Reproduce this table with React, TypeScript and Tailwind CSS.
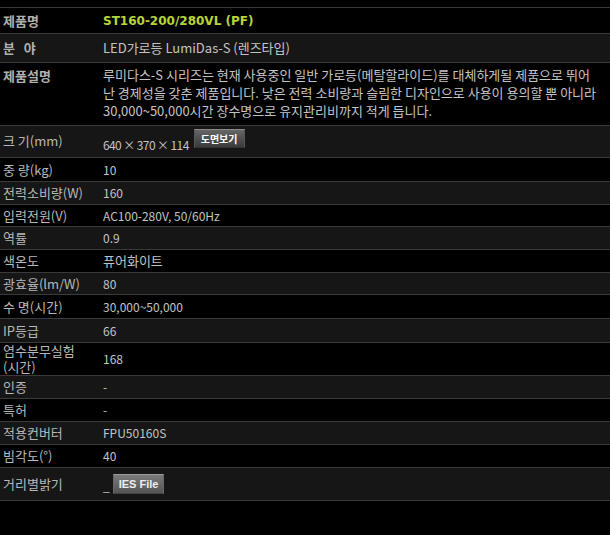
import React from "react";

type Row = {
  label: React.ReactNode;
  value: React.ReactNode;
  h: string;
  bold?: boolean;
  gray: boolean;
  align?: string;
};

const F = { fontFamily: '"Noto Sans CJK KR", "Noto Sans", sans-serif' };

const K = ({ children }: { children: React.ReactNode }) => <span className="text-[13px]">{children}</span>;

export default function App() {
  const rows: Row[] = [
    {
      label: <K>제품명</K>,
      bold: true,
      gray: false,
      h: "h-[26px]",
      value: (
        <span className="font-bold text-[#b8d43a]" style={{ fontFamily: '"DejaVu Sans", sans-serif' }}>
          ST160-200/280VL (PF)
        </span>
      ),
    },
    {
      label: <K>분&nbsp;&nbsp;&nbsp;야</K>,
      bold: true,
      gray: true,
      h: "h-[29px]",
      value: <K>LED가로등 LumiDas-S (렌즈타입)</K>,
    },
    {
      label: <K>제품설명</K>,
      bold: true,
      gray: false,
      h: "h-[63px]",
      align: "items-start pt-[3px]",
      value: (
        <div className="text-[13px] leading-[18px]">
          <div>루미다스-S 시리즈는 현재 사용중인 일반 가로등(메탈할라이드)를 대체하게될 제품으로 뛰어</div>
          <div>난 경제성을 갖춘 제품입니다. 낮은 전력 소비량과 슬림한 디자인으로 사용이 용의할 뿐 아니라</div>
          <div>30,000~50,000시간 장수명으로 유지관리비까지 적게 듭니다.</div>
        </div>
      ),
    },
    {
      label: <K>크 기(mm)</K>,
      gray: true,
      h: "h-[32px]",
      align: "items-start",
      value: (
        <div className="flex items-start">
          <span className="mt-[11px] leading-[16px] tracking-[-0.6px]">640 × 370 × 114</span>
          <span className="ml-[5px] mt-[3px] inline-flex h-[19px] items-center border border-t-[#8a8a8a] border-x-[#555] border-b-[#333] bg-gradient-to-b from-[#666] to-[#3a3a3a] px-[6px] text-[10px] font-bold text-white">
            도면보기
          </span>
        </div>
      ),
    },
    { label: <K>중 량(kg)</K>, gray: false, h: "h-[24px]", value: "10" },
    { label: <K>전력소비량(W)</K>, gray: true, h: "h-[23px]", value: "160" },
    { label: <K>입력전원(V)</K>, gray: false, h: "h-[22px]", value: "AC100-280V, 50/60Hz" },
    { label: <K>역률</K>, gray: true, h: "h-[23px]", value: "0.9" },
    { label: <K>색온도</K>, gray: false, h: "h-[23px]", value: <K>퓨어화이트</K> },
    { label: <K>광효율(lm/W)</K>, gray: true, h: "h-[22px]", value: "80" },
    { label: <K>수 명(시간)</K>, gray: false, h: "h-[24px]", value: "30,000~50,000" },
    { label: <K>IP등급</K>, gray: true, h: "h-[24px]", value: "66" },
    {
      label: (
        <div className="text-[13px] leading-[16px]">
          <div>염수분무실험</div>
          <div>(시간)</div>
        </div>
      ),
      gray: false,
      h: "h-[33px]",
      value: "168",
    },
    { label: <K>인증</K>, gray: true, h: "h-[23px]", value: "-" },
    { label: <K>특허</K>, gray: false, h: "h-[23px]", value: "-" },
    { label: <K>적용컨버터</K>, gray: true, h: "h-[23px]", value: "FPU50160S" },
    { label: <K>빔각도(°)</K>, gray: false, h: "h-[23px]", value: "40" },
    {
      label: <K>거리별밝기</K>,
      gray: true,
      h: "h-[33px]",
      value: (
        <div className="flex items-center">
          <span className="mt-[4px]">_</span>
          <span
            className="ml-[3px] inline-flex h-[20px] items-center border border-t-[#999] border-x-[#666] border-b-[#444] bg-gradient-to-b from-[#7a7a7a] to-[#555] px-[5px] text-[11px] font-bold text-[#eee]"
            style={{ fontFamily: '"Liberation Sans", Arial, sans-serif' }}
          >
            IES File
          </span>
        </div>
      ),
    },
  ];

  return (
    <div className="h-[535px] w-[610px] overflow-hidden bg-black text-[12px] text-[#c4c4c4]" style={F}>
      <div className="h-[8px] border-b border-[#3a3a3a]" />
      {rows.map((r, i) => (
        <div
          key={i}
          className={`flex border-b border-[#3a3a3a] ${r.h} ${r.align ?? "items-center"} ${r.gray ? "bg-[#161616]" : "bg-black"}`}
        >
          <div className={`w-[103px] shrink-0 pl-[3px] ${r.bold ? "font-bold text-[#b0b0b0]" : "text-[#b8b8b8]"} ${r.align === "items-start" ? "mt-[5px]" : ""}`}>
            {r.label}
          </div>
          <div className="flex-1 whitespace-nowrap">{r.value}</div>
        </div>
      ))}
    </div>
  );
}
